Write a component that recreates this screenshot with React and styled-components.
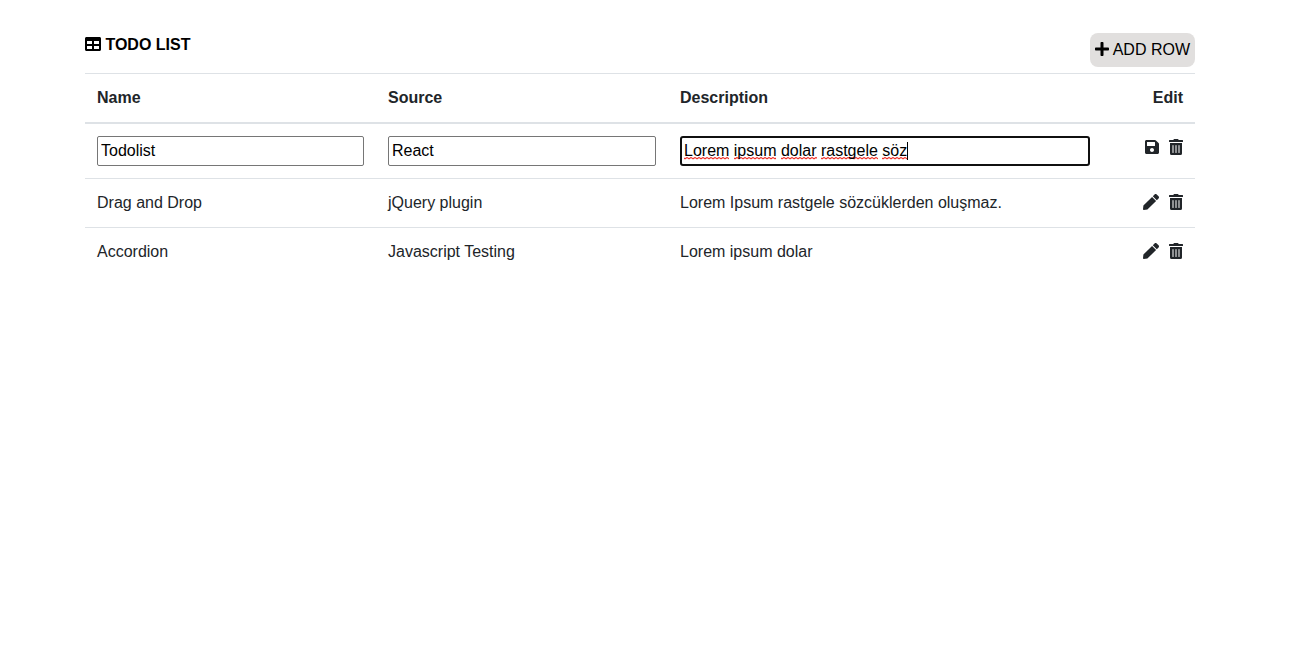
import React from "react";
import styled, { createGlobalStyle } from "styled-components";
import { FaTable, FaPlus, FaSave, FaPen, FaTrashAlt } from "react-icons/fa";

const GlobalStyle = createGlobalStyle`
  *, *::before, *::after { box-sizing: border-box; }
  body {
    margin: 0;
    background: #fff;
    color: #212529;
    font: 16px/24px "Liberation Sans", Arial, sans-serif;
  }
  svg { flex: none; }
`;

const PlusIcon = styled(FaPlus)`
  width: 14px;
`;

const SaveIcon = styled(FaSave)`
  width: 14px;
`;

const TrashIcon = styled(FaTrashAlt)`
  width: 14px;
`;

const Page = styled.main`
  width: 1110px;
  margin-left: 85px;
  padding-top: 33px;
`;

const Header = styled.header`
  display: flex;
  justify-content: space-between;
  align-items: flex-start;
  height: 40px;
  color: #000;
`;

const Title = styled.h1`
  display: flex;
  align-items: center;
  gap: 4.45px;
  margin: 0;
  font-size: 16px;
  line-height: 24px;
  font-weight: 700;
  svg { margin-top: -2px; }
`;

const AddButton = styled.button`
  display: flex;
  align-items: center;
  gap: 4px;
  height: 34px;
  padding: 0 5px;
  border: 0;
  border-radius: 8px;
  background: #e1dfde;
  color: #000;
  font: inherit;
  white-space: nowrap;
  svg { margin-top: -2px; }
`;

const Table = styled.table`
  width: 100%;
  table-layout: fixed;
  border-spacing: 0;
`;

const Col = styled.col`
  width: ${({ $width }) => $width}px;
`;

const HeadCell = styled.th`
  padding: 12px;
  border-top: 1px solid #dee2e6;
  border-bottom: 2px solid #dee2e6;
  text-align: ${({ $align }) => $align || "left"};
`;

const Cell = styled.td`
  padding: 12px;
  vertical-align: top;
  white-space: nowrap;
  border-top: ${({ $first }) => ($first ? "0" : "1px solid #dee2e6")};
`;

const Input = styled.input`
  display: block;
  width: 100%;
  height: 30px;
  padding: 1px 3px;
  border: 1px solid #767676;
  border-radius: 2px;
  background: #fff;
  color: #000;
  font: inherit;
`;

const FocusedField = styled.div`
  display: flex;
  align-items: center;
  gap: 4.45px;
  height: 30px;
  padding: 0 2px;
  border: 2px solid #101010;
  border-radius: 3px;
  color: #000;
`;

const Misspelled = styled.span`
  line-height: 18px;
  background: url("data:image/svg+xml,%3Csvg xmlns='http://www.w3.org/2000/svg' width='4' height='3'%3E%3Cpath d='M-1 .5 1 1.8 3 .5 5 1.8' fill='none' stroke='%23f03028' stroke-width='1.1'/%3E%3C/svg%3E") 0 100% repeat-x;
`;

const Caret = styled.span`
  width: 1px;
  height: 18px;
  margin-left: -4.45px;
  background: #000;
`;

const Actions = styled.div`
  display: flex;
  justify-content: flex-end;
  gap: 10px;
  padding-top: 3px;
`;

const FIELD_WORDS = ["Lorem", "ipsum", "dolar", "rastgele", "söz"];

const ROWS = [
  ["Drag and Drop", "jQuery plugin", "Lorem Ipsum rastgele sözcüklerden oluşmaz."],
  ["Accordion", "Javascript Testing", "Lorem ipsum dolar"],
];

export default function App() {
  return (
    <>
      <GlobalStyle />
      <Page>
        <Header>
          <Title><FaTable />TODO LIST</Title>
          <AddButton><PlusIcon />ADD ROW</AddButton>
        </Header>
        <Table>
          <colgroup>
            <Col $width={291} />
            <Col $width={292} />
            <Col $width={434} />
            <Col $width={93} />
          </colgroup>
          <thead>
            <tr>
              <HeadCell>Name</HeadCell>
              <HeadCell>Source</HeadCell>
              <HeadCell>Description</HeadCell>
              <HeadCell $align="right">Edit</HeadCell>
            </tr>
          </thead>
          <tbody>
            <tr>
              <Cell $first><Input defaultValue="Todolist" /></Cell>
              <Cell $first><Input defaultValue="React" /></Cell>
              <Cell $first>
                <FocusedField>
                  {FIELD_WORDS.map((word) => <Misspelled key={word}>{word}</Misspelled>)}
                  <Caret />
                </FocusedField>
              </Cell>
              <Cell $first><Actions><SaveIcon /><TrashIcon /></Actions></Cell>
            </tr>
            {ROWS.map(([name, source, description]) => (
              <tr key={name}>
                <Cell>{name}</Cell>
                <Cell>{source}</Cell>
                <Cell>{description}</Cell>
                <Cell><Actions><FaPen /><TrashIcon /></Actions></Cell>
              </tr>
            ))}
          </tbody>
        </Table>
      </Page>
    </>
  );
}
